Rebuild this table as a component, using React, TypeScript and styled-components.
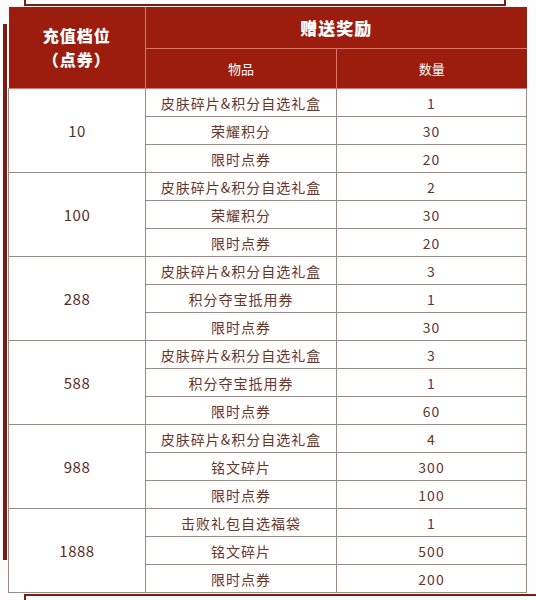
import { Fragment } from 'react'
import styled, { createGlobalStyle } from 'styled-components'

const RED = '#9c1c0e'
const FRAME = '#7a1c14'
const LINE = '#a08a84'
const TEXT = '#6b3426'

const GlobalStyle = createGlobalStyle`
  html, body {
    margin: 0;
    padding: 0;
    background: #ffffff;
  }
  body {
    font-family: "Noto Sans CJK SC", "Noto Sans", sans-serif;
  }
`

const Page = styled.div`
  position: relative;
  width: 536px;
  height: 600px;
  overflow: hidden;
  background: #fdfcfc;
`

const Frame = styled.div<{ $top: number; $left: number; $right: number; $bottom: number }>`
  position: absolute;
  pointer-events: none;
  border: 2px solid ${FRAME};
  top: ${(p) => p.$top}px;
  left: ${(p) => p.$left}px;
  right: ${(p) => p.$right}px;
  bottom: ${(p) => p.$bottom}px;
`

const Content = styled.div`
  position: relative;
  padding: 7px 10px 0 8px;
`

const Table = styled.table`
  width: 518px;
  table-layout: fixed;
  border-collapse: collapse;
  background: #ffffff;
`

const HeadCell = styled.th<{ $big?: boolean; $height: number }>`
  background: ${RED};
  color: #fff;
  height: ${(p) => p.$height}px;
  padding: 0;
  font-size: ${(p) => (p.$big ? '17px' : '13px')};
  font-weight: ${(p) => (p.$big ? 900 : 400)};
  line-height: 18px;
  letter-spacing: ${(p) => (p.$big ? '1px' : '0')};
  border: 1px solid #d8786a;
  border-top: none;
  vertical-align: middle;
  text-align: center;

  &:first-child {
    border-left: none;
  }
  &:last-child {
    border-right: none;
  }
`

const HeadLine = styled.span`
  display: block;
  font-size: 16px;
  line-height: 23.5px;
  white-space: nowrap;
`

const Cell = styled.td`
  height: 27px;
  padding: 0;
  border: 1px solid ${LINE};
  color: ${TEXT};
  font-size: 14px;
  letter-spacing: 1px;
  text-align: center;
  vertical-align: middle;
`

const Tier = styled(Cell)`
  font-size: 15px;
  letter-spacing: 0.5px;
  color: #5b2c22;
`

type Reward = [string, string]

const tiers: { amount: string; rewards: Reward[] }[] = [
  { amount: '10', rewards: [['皮肤碎片&积分自选礼盒', '1'], ['荣耀积分', '30'], ['限时点券', '20']] },
  { amount: '100', rewards: [['皮肤碎片&积分自选礼盒', '2'], ['荣耀积分', '30'], ['限时点券', '20']] },
  { amount: '288', rewards: [['皮肤碎片&积分自选礼盒', '3'], ['积分夺宝抵用券', '1'], ['限时点券', '30']] },
  { amount: '588', rewards: [['皮肤碎片&积分自选礼盒', '3'], ['积分夺宝抵用券', '1'], ['限时点券', '60']] },
  { amount: '988', rewards: [['皮肤碎片&积分自选礼盒', '4'], ['铭文碎片', '300'], ['限时点券', '100']] },
  { amount: '1888', rewards: [['击败礼包自选福袋', '1'], ['铭文碎片', '500'], ['限时点券', '200']] }
]

export default function App() {
  return (
    <Page>
      <GlobalStyle />
      <Frame $top={-4} $left={24} $right={30} $bottom={594} />
      <Frame $top={24} $left={3} $right={540} $bottom={40} />
      <Frame $top={594} $left={24} $right={-4} $bottom={-4} />
      <Content>
        <Table>
          <colgroup>
            <col style={{ width: 137 }} />
            <col style={{ width: 191 }} />
            <col style={{ width: 190 }} />
          </colgroup>
          <thead>
            <tr>
              <HeadCell rowSpan={2} $big $height={41}>
                <HeadLine>充值档位</HeadLine>
                <HeadLine>（点券）</HeadLine>
              </HeadCell>
              <HeadCell colSpan={2} $big $height={41}>
                赠送奖励
              </HeadCell>
            </tr>
            <tr>
              <HeadCell $height={39}>物品</HeadCell>
              <HeadCell $height={39}>数量</HeadCell>
            </tr>
          </thead>
          <tbody>
            {tiers.map((tier) => (
              <Fragment key={tier.amount}>
                {tier.rewards.map(([item, count], index) => (
                  <tr key={item + index}>
                    {index === 0 && <Tier rowSpan={3}>{tier.amount}</Tier>}
                    <Cell>{item}</Cell>
                    <Cell>{count}</Cell>
                  </tr>
                ))}
              </Fragment>
            ))}
          </tbody>
        </Table>
      </Content>
    </Page>
  )
}
